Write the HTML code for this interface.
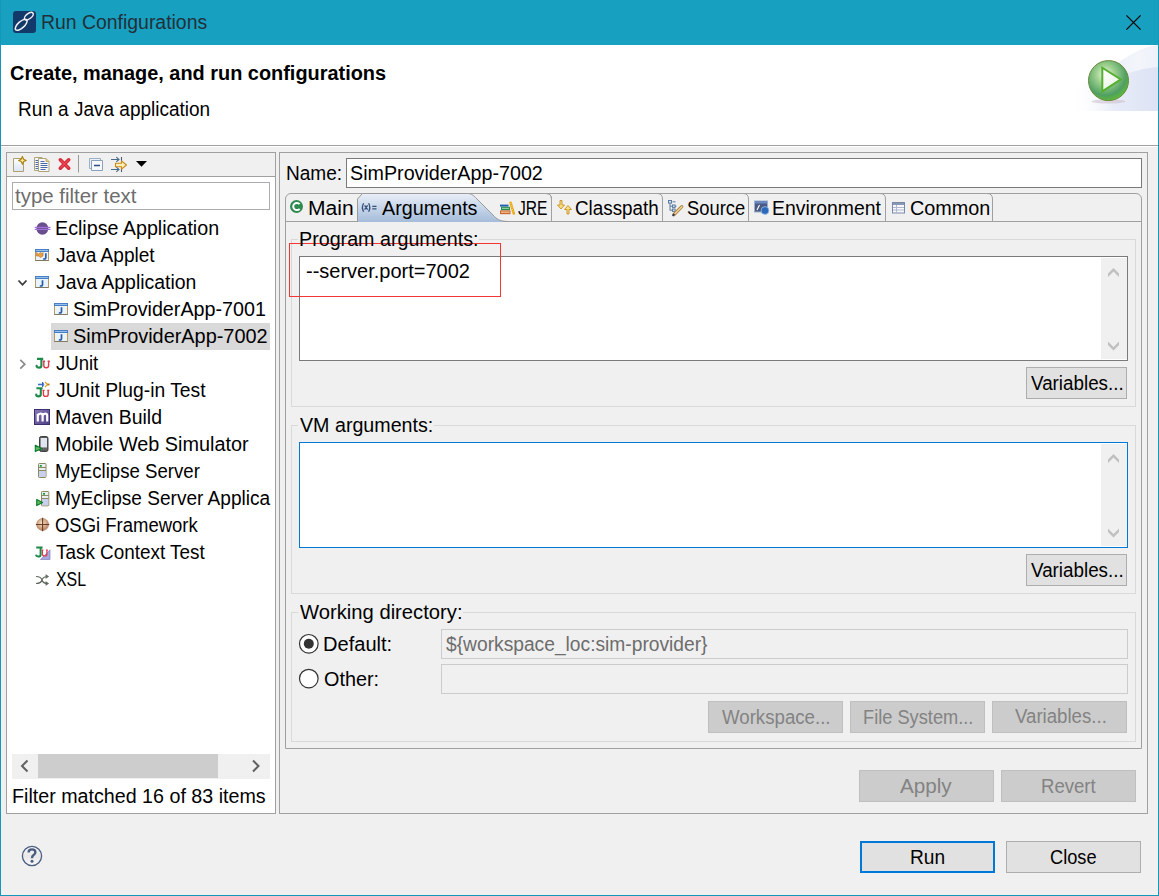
<!DOCTYPE html>
<html><head><meta charset="utf-8">
<style>
*{margin:0;padding:0;box-sizing:border-box}
html,body{width:1159px;height:896px;overflow:hidden;background:#f0f0f0;font-family:"Liberation Sans",sans-serif;color:#000;position:relative}
.a{position:absolute}
.t{position:absolute;line-height:0;white-space:pre;transform-origin:0 0}
.bx{position:absolute;border:1px solid #a0a0a0}
.btn{position:absolute;background:#e1e1e1;border:1px solid #adadad}
.dis{background:#cccccc;border-color:#bfbfbf}
.grp{position:absolute;border:1px solid #d9d9d9}
.lbg{position:absolute;background:#f0f0f0;height:6px}
svg{position:absolute;overflow:visible}
</style></head><body>
<!-- ===== window frame ===== -->
<div class="a" style="left:0;top:0;width:1159px;height:45px;background:#18a0c0"></div>
<div class="a" style="left:0;top:0;width:1px;height:896px;background:#1597b9"></div>
<div class="a" style="left:1158px;top:0;width:1px;height:896px;background:#1597b9"></div>
<div class="a" style="left:0;top:895px;width:1159px;height:1px;background:#1597b9"></div>
<!-- title icon -->
<div class="a" style="left:13px;top:11px;width:23px;height:22px;background:#13396b;border-radius:3px"></div>
<svg style="left:13px;top:11px" width="23" height="22" viewBox="0 0 23 22">
 <ellipse cx="15.8" cy="5.2" rx="5.2" ry="2.6" transform="rotate(-38 15.8 5.2)" fill="none" stroke="#f2f2f2" stroke-width="1.4"/>
 <ellipse cx="8.2" cy="13.8" rx="7.4" ry="3.2" transform="rotate(-42 8.2 13.8)" fill="none" stroke="#f2f2f2" stroke-width="1.5"/>
</svg>
<!-- close X -->
<svg style="left:1125px;top:15px" width="17" height="16" viewBox="0 0 17 16"><path d="M1.4 0.4L15.6 14.6M15.6 0.4L1.4 14.6" stroke="#000" stroke-width="1.2"/></svg>

<!-- ===== header ===== -->
<div class="a" style="left:1px;top:45px;width:1157px;height:100px;background:#fff"></div>
<svg style="left:1070px;top:45px" width="88" height="66" viewBox="0 0 88 66">
 <defs>
  <linearGradient id="bnr" x1="0" y1="0" x2="1" y2="0"><stop offset="0" stop-color="#fff" stop-opacity="0"/><stop offset="0.5" stop-color="#e8ecf8"/><stop offset="1" stop-color="#dde3f5"/></linearGradient>
  <linearGradient id="bnr2" x1="0" y1="0" x2="1" y2="0"><stop offset="0" stop-color="#fff" stop-opacity="0"/><stop offset="0.6" stop-color="#f3f5fb"/><stop offset="1" stop-color="#eef1fa"/></linearGradient>
 </defs>
 <rect x="0" y="0" width="88" height="66" fill="url(#bnr)"/>
 <path d="M0 0 H88 V0 C70 3, 55 12, 40 24 C 30 32, 20 40, 0 40 Z" fill="#fff"/>
 <path d="M40 24 C 55 12, 70 3, 88 0 V 22 C 75 23, 62 26, 50 32 Z" fill="url(#bnr2)"/>
</svg>
<svg style="left:1085px;top:55px" width="50" height="52" viewBox="0 0 50 52">
 <defs>
  <radialGradient id="pg" cx="0.42" cy="0.35" r="0.65">
   <stop offset="0" stop-color="#f4fbf0"/><stop offset="0.35" stop-color="#9fd18f"/><stop offset="0.8" stop-color="#4f9f62"/><stop offset="1" stop-color="#5cb83a"/>
  </radialGradient>
 </defs>
 <ellipse cx="23.5" cy="46.5" rx="17" ry="2" fill="#c8b8c8" opacity="0.5"/>
 <circle cx="23.5" cy="25.6" r="20" fill="url(#pg)" stroke="#6a8a3a" stroke-width="1"/>
 <path d="M17.3 12.7 L17.3 36.4 L35.8 24.4 Z" fill="#fff" fill-opacity="0.85" stroke="#56b030" stroke-width="2" stroke-linejoin="miter"/>
</svg>
<div class="a" style="left:1px;top:145px;width:1157px;height:1px;background:#a0a0a0"></div>
<div class="a" style="left:1px;top:146px;width:1157px;height:1px;background:#fff"></div>

<!-- ===== left panel ===== -->
<div class="bx" style="left:6px;top:152px;width:270px;height:662px;background:#fff"></div>
<div class="a" style="left:7px;top:153px;width:268px;height:24px;background:#f0f0f0;border-bottom:1px solid #a0a0a0"></div>
<!-- toolbar icons -->
<svg style="left:12px;top:156px" width="140" height="18" viewBox="0 0 140 18">
 <defs><linearGradient id="pgn" x1="0" y1="0" x2="0" y2="1"><stop offset="0" stop-color="#fff"/><stop offset="1" stop-color="#d8e4f4"/></linearGradient></defs>
 <!-- new -->
 <path d="M1.5 2.5 H11.5 V15.5 H1.5 Z" fill="url(#pgn)" stroke="#b0a070" stroke-width="1"/>
 <path d="M10.4 0.6 L11.6 3.2 L14.2 4.4 L11.6 5.6 L10.4 8.2 L9.2 5.6 L6.6 4.4 L9.2 3.2 Z" fill="#fbeaa0" stroke="#a8820a" stroke-width="1.1" stroke-linejoin="round"/>
 <!-- duplicate -->
 <path d="M22.5 1.5 H30 V14.5 H22.5 Z" fill="#f4f6fa" stroke="#b0a478"/>
 <path d="M26.5 2.5 H34 L37 5.5 V15.5 H26.5 Z" fill="#f6f8fc" stroke="#b0a478"/>
 <path d="M34 2.5 V5.5 H37" fill="#e0c880" stroke="#c0a860"/>
 <path d="M28.5 5.5h4M28.5 7.5h7M28.5 9.5h7M28.5 11.5h7M28.5 13.5h5M23.5 4.5h2.5M23.5 6.5h2.5M23.5 8.5h2.5M23.5 10.5h2.5M23.5 12.5h2.5" stroke="#4a6aa8" stroke-width="1"/>
 <!-- delete -->
 <path d="M48.3 3.8 L56.7 12.2 M56.7 3.8 L48.3 12.2" stroke="#d82a38" stroke-width="3.6" stroke-linecap="round"/>
 <path d="M48.8 4.3 L56.2 11.7 M56.2 4.3 L48.8 11.7" stroke="#f05a66" stroke-width="1.2" stroke-linecap="round" opacity="0.7"/>
 <!-- separator -->
 <path d="M66.5 -1 V16.5" stroke="#9a9a9a" stroke-width="1"/>
 <!-- collapse -->
 <path d="M77.5 2.5 H88.5 V12.5 H77.5 Z" fill="#eef2f8" stroke="#9ab0c8"/>
 <path d="M79.5 4.5 H90.5 V14.5 H79.5 Z" fill="#f6f8fc" stroke="#8aa0b8"/>
 <path d="M82 9.5 H88" stroke="#2a4e8a" stroke-width="1.5"/>
 <!-- filter -->
 <path d="M99 3.5 H107 M104.3 1.2 L107 3.5 L104.3 5.8 M99 13.5 H107 M104.3 11.2 L107 13.5 L104.3 15.8" fill="none" stroke="#4a6a8a" stroke-width="1.1"/>
 <path d="M109.5 1 V5.5 M109.5 11.5 V16" stroke="#4a5a78" stroke-width="1.1"/>
 <path d="M103.5 7.2 H109.5 V4.8 L114.5 9 L109.5 13.2 V10.8 H103.5 Z" fill="#fff0b8" stroke="#c8881a" stroke-width="1.1" stroke-linejoin="round"/>
 <!-- dropdown -->
 <path d="M124 5 H135 L129.5 10.8 Z" fill="#000"/>
</svg>
<div class="bx" style="left:12px;top:182px;width:258px;height:28px;border-color:#abadb3;background:#fff"></div>
<!-- selection -->
<div class="a" style="left:51px;top:323px;width:219px;height:27px;background:#d9d9d9"></div>
<!-- tree chevrons -->
<svg style="left:17px;top:278px" width="12" height="10" viewBox="0 0 12 10"><path d="M1.5 2.5 L5.5 6.8 L9.5 2.5" fill="none" stroke="#3a3a3a" stroke-width="1.8"/></svg>
<svg style="left:18px;top:358px" width="10" height="12" viewBox="0 0 10 12"><path d="M2.3 1.8 L6.8 6.2 L2.3 10.6" fill="none" stroke="#8a8a8a" stroke-width="1.7"/></svg>
<!-- tree icons -->
<svg style="left:34px;top:220px" width="18" height="370" viewBox="0 0 18 370">
 <defs>
  <linearGradient id="jwin" x1="0" y1="0" x2="0" y2="1"><stop offset="0" stop-color="#fff"/><stop offset="1" stop-color="#dce8f6"/></linearGradient>
 </defs>
 <!-- eclipse app -->
 <ellipse cx="8.4" cy="8.5" rx="5.9" ry="6.2" fill="#6a4e8e"/>
 <path d="M1.2 7.4 H16 M1.2 9.4 H16" stroke="#a070d8" stroke-width="1.2" stroke-linecap="round"/>
 <!-- java applet (row1, top 249-220=29) -->
 <g transform="translate(0,29)">
  <rect x="1.5" y="0.5" width="13" height="11" fill="#eaf4fc" stroke="#b89a60"/><rect x="1" y="0" width="14" height="3" fill="#4a7ec4"/><path d="M2 1.5 H14" stroke="#a8d0f0" stroke-width="0.8"/><path d="M1.5 11.5 H14.5" stroke="#807860"/>
  <path d="M2.5 3.5 L4.5 5 L6.5 3.5 L8.5 5 L9 3.5 V7 L6.5 8.5 L4.5 7 L2.5 7 Z" fill="#e8a040" stroke="#b87020" stroke-width="0.6"/>
  <path d="M11.8 4.2 V8.6 Q11.8 10.2 9.9 10 L9.2 9.8" fill="none" stroke="#2a5aa8" stroke-width="1.7"/>
 </g>
 <!-- java application (row2, 276) -->
 <g transform="translate(0,56)"><rect x="1.5" y="0.5" width="13" height="11" fill="#eaf4fc" stroke="#b89a60"/><rect x="1" y="0" width="14" height="3" fill="#4a7ec4"/><path d="M2 1.5 H14" stroke="#a8d0f0" stroke-width="0.8"/><path d="M1.5 11.5 H14.5" stroke="#807860"/><path d="M8.5 4.2 V8.6 Q8.5 10.2 6.6 10 L5.8 9.8" fill="none" stroke="#2a5aa8" stroke-width="1.7"/></g>
 <!-- junit row5 (358) -->
 <g transform="translate(0,138)">
  <path d="M3 0.9 H9.2 M7.4 0.9 V7.4 Q7.4 9.6 5 9.6 Q3.1 9.6 2.4 8.2" fill="none" stroke="#1e8a4a" stroke-width="2.1"/>
  <circle cx="2.6" cy="7.8" r="1.1" fill="#1e8a4a"/>
  <path d="M9.8 3.4 V7.6 Q9.8 9.8 12.2 9.8 Q14.6 9.8 14.6 7.6 V3.4 M8.8 3.2h2.2M13.6 3.2h2.2" fill="none" stroke="#e03848" stroke-width="1.4"/>
 </g>
 <!-- junit plugin row6 (381) -->
 <g transform="translate(0,161)">
  <path d="M4 3.5 H8.5" stroke="#3a70d0" stroke-width="1.6"/>
  <path d="M8.5 1 Q11 3.5 8.5 6 Z" fill="#8ab0f0" stroke="#3a6ac8" stroke-width="1"/>
  <path d="M11 1 L13.5 3.5 L11 6" fill="none" stroke="#e0a020" stroke-width="1.2"/>
  <rect x="13.5" y="2.6" width="2" height="1.8" fill="#c07010"/>
  <path d="M2.4 7.2 H8.6 M6.8 7.2 V13.2 Q6.8 15.4 4.4 15.4 Q2.6 15.4 2 14" fill="none" stroke="#1e8a4a" stroke-width="2.1"/>
  <circle cx="2.2" cy="13.6" r="1.1" fill="#1e8a4a"/>
  <path d="M9.4 9.6 V13.2 Q9.4 15.4 11.8 15.4 Q14.2 15.4 14.2 13.2 V9.6 M8.4 9.4h2.2M13.2 9.4h2.2" fill="none" stroke="#e03848" stroke-width="1.4"/>
 </g>
 <!-- maven row7 (409) -->
 <g transform="translate(0,189)">
  <defs><linearGradient id="mvg" x1="0" y1="0" x2="1" y2="1"><stop offset="0" stop-color="#8a7ab8"/><stop offset="1" stop-color="#4e3e84"/></linearGradient></defs>
  <rect x="0.5" y="0.5" width="15" height="15" fill="url(#mvg)" stroke="#3e3070" stroke-width="1"/>
  <path d="M3.8 12.6 V4.8 M3.8 6.6 Q4.6 4.6 6.6 4.6 Q8.6 4.6 8.6 6.8 V12.6 M8.6 6.6 Q9.4 4.6 11.2 4.6 Q13.2 4.6 13.2 6.8 V12.6" fill="none" stroke="#fff" stroke-width="2.2"/>
 </g>
 <!-- mobile row8 (436) -->
 <g transform="translate(0,216)">
  <rect x="5.5" y="0.5" width="8.5" height="15" rx="1.8" fill="#585858" stroke="#404040" stroke-width="1"/>
  <rect x="6.6" y="2" width="6.4" height="9.5" fill="#dfe6ef"/>
  <path d="M7 13 h1 M9.3 13 h1 M11.6 13 h1" stroke="#909090" stroke-width="1"/>
  <path d="M1.3 9.3 V15.6 L7.8 12.4 Z" fill="#5ab860" stroke="#0a7a2a" stroke-width="1.1" stroke-linejoin="round"/>
 </g>
 <!-- server row9 (464) -->
 <g transform="translate(0,244)">
  <rect x="4.5" y="-0.5" width="7.5" height="14" rx="0.8" fill="#eceef4" stroke="#8a8a60"/>
  <rect x="5" y="6.5" width="6.5" height="6.5" fill="#c8d0ee"/>
  <path d="M4.5 3.5 H12 M4.5 6.5 H12" stroke="#8a8a60"/>
  <rect x="5.8" y="1" width="2" height="1.7" fill="#10a030"/>
 </g>
 <!-- server app row10 (491) -->
 <g transform="translate(0,271)">
  <rect x="7.5" y="0.5" width="7.3" height="14.3" rx="0.8" fill="#eceef4" stroke="#8a8a60"/>
  <rect x="8" y="7.5" width="6.3" height="6.8" fill="#c8d0ee"/>
  <path d="M7.5 4.5 H14.8 M7.5 7.5 H14.8" stroke="#8a8a60"/>
  <rect x="9" y="2" width="2" height="1.7" fill="#10a030"/>
  <path d="M2.7 8.6 V14.6 L8.6 11.6 Z" fill="#5ab860" stroke="#0a7a2a" stroke-width="1.1" stroke-linejoin="round"/>
 </g>
 <!-- osgi row11 (517) -->
 <g transform="translate(0,297)">
  <defs><radialGradient id="osg" cx="0.45" cy="0.4" r="0.6"><stop offset="0" stop-color="#f8e8c8"/><stop offset="1" stop-color="#b88060"/></radialGradient></defs>
  <circle cx="8.6" cy="7.5" r="6" fill="url(#osg)" stroke="#c09070" stroke-width="0.8"/>
  <path d="M8.6 0.8 V14.2 M1.9 7.5 H15.3" stroke="#6a3a24" stroke-width="1.1"/>
 </g>
 <!-- task context row12 (544) -->
 <g transform="translate(0,324)">
  <path d="M6.5 15.5 L16 5.8 V15.5 Z" fill="#a8a8e0" stroke="#8080c0" stroke-width="0.7"/>
  <path d="M2.2 3.6 H8.6 M6.6 3.6 V10.4 Q6.6 12.6 4.2 12.6 Q2.4 12.6 1.8 10.8" fill="none" stroke="#1e8a4a" stroke-width="2"/>
  <path d="M8.4 6.2 V10 Q8.4 12 10.6 12 Q12.9 12 12.9 10 V6.2 M7.6 6.1h1.8M12 6.1h1.8" fill="none" stroke="#e03848" stroke-width="1.2"/>
 </g>
 <!-- xsl row13 (574) -->
 <g transform="translate(0,354)">
  <path d="M2 2.5 Q7 2.5 8 6 Q9 9.5 13.5 9.5 M2 9.5 Q7 9.5 8 6 Q9 2.5 13.5 2.5" fill="none" stroke="#606a60" stroke-width="1.2"/>
  <path d="M11.5 0.8 L14 2.5 L11.5 4.2 M11.5 7.8 L14 9.5 L11.5 11.2" fill="none" stroke="#606a60" stroke-width="1.2"/>
 </g>
</svg>
<!-- level-2 icons -->
<svg style="left:53px;top:303px" width="18" height="40" viewBox="0 0 18 40">
 <g><rect x="1.5" y="0.5" width="13" height="11" fill="#eaf4fc" stroke="#b89a60"/><rect x="1" y="0" width="14" height="3" fill="#4a7ec4"/><path d="M2 1.5 H14" stroke="#a8d0f0" stroke-width="0.8"/><path d="M1.5 11.5 H14.5" stroke="#807860"/><path d="M8.5 4.2 V8.6 Q8.5 10.2 6.6 10 L5.8 9.8" fill="none" stroke="#2a5aa8" stroke-width="1.7"/></g>
 <g transform="translate(0,27)"><rect x="1.5" y="0.5" width="13" height="11" fill="#eaf4fc" stroke="#b89a60"/><rect x="1" y="0" width="14" height="3" fill="#4a7ec4"/><path d="M2 1.5 H14" stroke="#a8d0f0" stroke-width="0.8"/><path d="M1.5 11.5 H14.5" stroke="#807860"/><path d="M8.5 4.2 V8.6 Q8.5 10.2 6.6 10 L5.8 9.8" fill="none" stroke="#2a5aa8" stroke-width="1.7"/></g>
</svg>
<!-- h scrollbar -->
<div class="a" style="left:12px;top:754px;width:258px;height:25px;background:#f0f0f0"></div>
<div class="a" style="left:38px;top:754px;width:180px;height:24px;background:#cdcdcd"></div>
<svg style="left:18px;top:758px" width="14" height="16" viewBox="0 0 14 16"><path d="M9.5 2.5 L4 8 L9.5 13.5" fill="none" stroke="#606060" stroke-width="2"/></svg>
<svg style="left:249px;top:758px" width="14" height="16" viewBox="0 0 14 16"><path d="M4 2.5 L9.5 8 L4 13.5" fill="none" stroke="#606060" stroke-width="2"/></svg>

<!-- ===== right panel ===== -->
<div class="bx" style="left:279px;top:152px;width:869px;height:662px"></div>
<div class="bx" style="left:346px;top:158px;width:796px;height:30px;background:#fff;border-color:#7a7a7a"></div>
<!-- tab folder -->
<div class="bx" style="left:285px;top:193px;width:857px;height:556px;border-radius:6px 6px 0 0;background:#f0f0f0"></div>
<div class="a" style="left:286px;top:221px;width:855px;height:1px;background:#a0a0a0"></div>
<!-- selected tab -->
<svg style="left:357px;top:193px" width="152" height="29" viewBox="0 0 152 29">
 <defs><linearGradient id="selg" x1="0" y1="0" x2="0" y2="1"><stop offset="0" stop-color="#e9eff8"/><stop offset="1" stop-color="#a5bcda"/></linearGradient></defs>
 <path d="M0.5 29 V6 L5.5 0.5 H110.5 C113.5 0.5 115.5 1.5 118.5 4.5 L137.5 23.5 C141 27 144 28.5 150 28.5 V29 Z" fill="url(#selg)"/>
 <path d="M0.5 29 V6 L5.5 0.5 H110.5 C113.5 0.5 115.5 1.5 118.5 4.5 L137.5 23.5 C141 27 144 28.5 152 28.5" fill="none" stroke="#9a9a9a" stroke-width="1"/>
</svg>
<!-- tab separators with rounded top-right corners -->
<svg style="left:280px;top:193px" width="720" height="29" viewBox="0 0 720 29">
 <path d="M271.5 28 V6 Q271.5 0.5 266 0.5 M382.5 28 V6 Q382.5 0.5 377 0.5 M468.5 28 V6 Q468.5 0.5 463 0.5 M605.5 28 V6 Q605.5 0.5 600 0.5 M712.5 28 V6 Q712.5 0.5 707 0.5" fill="none" stroke="#a0a0a0" stroke-width="1"/>
 <path d="M271.5 28 V6 Q271.5 0.5 266 0.5" fill="none" stroke="#a0a0a0"/>
</svg>
<!-- tab icons -->
<svg style="left:289px;top:199px" width="720" height="18" viewBox="0 0 720 18">
 <!-- main -->
 <circle cx="7.5" cy="7.5" r="6.5" fill="#2e8a4e"/>
 <path d="M10.6 5.2 A3.6 3.6 0 1 0 10.6 9.8" fill="none" stroke="#fff" stroke-width="2"/>
 <!-- args (x)= -->
 <g transform="translate(72,4)" fill="none" stroke="#34507a" stroke-width="1.3"><path d="M2.6 0.3 Q0.2 4.5 2.6 8.7 M7.6 0.3 Q10 4.5 7.6 8.7 M3.6 2.3 L6.6 6.7 M6.6 2.3 L3.6 6.7 M11.3 3.3 H15.5 M11.3 5.8 H15.5"/></g>
 <!-- JRE books -->
 <g transform="translate(211,3)">
  <rect x="0" y="2.6" width="8.5" height="2" fill="#2060b0"/>
  <rect x="1" y="4.8" width="9" height="3.4" fill="#2a8a50"/><rect x="2" y="5.8" width="7" height="1.2" fill="#8ad0a0"/>
  <rect x="0" y="8.4" width="10.5" height="3.8" fill="#c86a30"/><rect x="1" y="9.4" width="8.5" height="1.6" fill="#f0b080"/>
  <path d="M10.6 0.8 L13.8 11.5" stroke="#e8a818" stroke-width="2.6" stroke-linecap="round"/>
  <path d="M10.6 0.8 L13.8 11.5" stroke="#f8d860" stroke-width="1" stroke-dasharray="1 1.2"/>
 </g>
 <!-- classpath arrows -->
 <g transform="translate(268,1)">
  <path d="M3 0.5 V5 H0.5 L4 9 L7.5 5 H5 V0.5 Z" fill="#f8e080" stroke="#c89020" stroke-width="0.9"/>
  <path d="M10 14 V9.5 H7.5 L11 5.5 L14.5 9.5 H12 V14 Z" fill="#f8e080" stroke="#c89020" stroke-width="0.9"/>
 </g>
 <!-- source -->
 <g transform="translate(379,1)">
  <rect x="0.5" y="0.5" width="3" height="2.6" fill="#dde6f0" stroke="#5a7aa0" stroke-width="1"/>
  <path d="M4.5 1.8 H7.5 M2 3.2 V10.5 M2 6.2 H4.2 M2 10.2 H4.2 M7 6.2 H8.5" stroke="#5a7aa0" stroke-width="1"/>
  <rect x="4.5" y="5" width="2.6" height="2.4" fill="#dde6f0" stroke="#5a7aa0" stroke-width="1"/>
  <rect x="4.5" y="9" width="2.6" height="2.4" fill="#dde6f0" stroke="#5a7aa0" stroke-width="1"/>
  <path d="M6 14.5 L13.8 6.7" stroke="#a88040" stroke-width="3.2" stroke-linecap="round"/>
  <path d="M6 14.5 L13.8 6.7" stroke="#f0d090" stroke-width="1.6" stroke-linecap="round"/>
  <path d="M4.6 15.8 L6.4 13.8" stroke="#303a50" stroke-width="1.8"/>
 </g>
 <!-- environment -->
 <g transform="translate(465,0.5)">
  <rect x="0.5" y="1.5" width="13" height="11" fill="#4a5a80" stroke="#9ab0d0"/>
  <rect x="1" y="2" width="12" height="2" fill="#6a8ac8"/>
  <path d="M3 10.5 L5.5 5.5" stroke="#fff" stroke-width="1.1"/>
  <circle cx="11" cy="11" r="3.9" fill="#2a68b8" stroke="#a0c0e8" stroke-width="0.8"/>
 </g>
 <!-- common -->
 <g transform="translate(603,3)">
  <rect x="0.5" y="0.5" width="12" height="10.5" fill="#f6f8fc" stroke="#7a88a8"/>
  <rect x="1" y="1" width="11" height="2" fill="#8a98b8"/>
  <path d="M1 5.5h11M1 8h11M4.5 3v8" stroke="#b0b8d0" stroke-width="1"/>
 </g>
</svg>

<!-- program arguments group -->
<div class="grp" style="left:291px;top:239px;width:845px;height:168px"></div>
<div class="grp" style="left:291px;top:425px;width:845px;height:169px"></div>
<div class="grp" style="left:291px;top:612px;width:845px;height:130px"></div>
<div class="lbg" style="left:298px;top:235px;width:181px"></div>
<div class="lbg" style="left:298px;top:421px;width:136px"></div>
<div class="lbg" style="left:298px;top:608px;width:165px"></div>

<!-- program args textarea -->
<div class="bx" style="left:299px;top:256px;width:829px;height:105px;background:#fff;border-color:#7a7a7a"></div>
<div class="a" style="left:1101px;top:258px;width:26px;height:101px;background:#f0f0f0"></div>
<svg style="left:1101px;top:258px" width="26" height="101" viewBox="0 0 26 101">
 <path d="M7 15.5 L12.5 10 L18 15.5 V19 L12.5 13.5 L7 19 Z" fill="#c0c0c0"/>
 <path d="M7 83.5 L12.5 89 L18 83.5 V87 L12.5 92.5 L7 87 Z" fill="#c0c0c0"/>
</svg>
<div class="btn" style="left:1026px;top:367px;width:101px;height:32px"></div>

<!-- red annotation -->
<div class="a" style="left:289px;top:243px;width:212px;height:54px;border:1px solid #f53434"></div>

<!-- VM args textarea -->
<div class="bx" style="left:299px;top:442px;width:829px;height:106px;background:#fff;border-color:#0078d7"></div>
<div class="a" style="left:1101px;top:444px;width:26px;height:102px;background:#f0f0f0"></div>
<svg style="left:1101px;top:444px" width="26" height="102" viewBox="0 0 26 102">
 <path d="M7 15.5 L12.5 10 L18 15.5 V19 L12.5 13.5 L7 19 Z" fill="#c0c0c0"/>
 <path d="M7 84.5 L12.5 90 L18 84.5 V88 L12.5 93.5 L7 88 Z" fill="#c0c0c0"/>
</svg>
<div class="btn" style="left:1026px;top:554px;width:101px;height:32px"></div>

<!-- working directory -->
<svg style="left:298px;top:633px" width="22" height="58" viewBox="0 0 22 58">
 <circle cx="10.8" cy="10.8" r="9.3" fill="#fff" stroke="#333" stroke-width="1.2"/>
 <circle cx="10.8" cy="10.8" r="5" fill="#333"/>
 <circle cx="10.8" cy="45.6" r="9.3" fill="#fff" stroke="#333" stroke-width="1.2"/>
</svg>
<div class="bx" style="left:441px;top:629px;width:687px;height:30px;border-color:#cccccc;background:#f0f0f0"></div>
<div class="bx" style="left:441px;top:664px;width:687px;height:30px;border-color:#cccccc;background:#f0f0f0"></div>
<div class="btn dis" style="left:708px;top:701px;width:135px;height:32px"></div>
<div class="btn dis" style="left:850px;top:701px;width:135px;height:32px"></div>
<div class="btn dis" style="left:992px;top:701px;width:135px;height:32px"></div>

<!-- apply/revert -->
<div class="btn dis" style="left:859px;top:770px;width:135px;height:32px"></div>
<div class="btn dis" style="left:1001px;top:770px;width:135px;height:32px"></div>

<!-- ===== bottom ===== -->
<svg style="left:20px;top:844px" width="24" height="24" viewBox="0 0 24 24">
 <defs><linearGradient id="hg" x1="0" y1="0" x2="0" y2="1"><stop offset="0" stop-color="#fafafa"/><stop offset="0.5" stop-color="#e8e8e8"/><stop offset="1" stop-color="#f8f8f8"/></linearGradient></defs>
 <circle cx="12" cy="12" r="9.6" fill="url(#hg)" stroke="#4a5d80" stroke-width="1.3"/>
 <path d="M8.6 8.4 Q8.6 5.4 12 5.4 Q15.4 5.4 15.4 8.2 Q15.4 10 13.4 11.2 Q12 12 12 14.2" fill="none" stroke="#4a5d80" stroke-width="2.4"/>
 <circle cx="12" cy="17.3" r="1.5" fill="#4a5d80"/>
</svg>
<div class="btn" style="left:860px;top:841px;width:135px;height:32px;border:2px solid #0078d7"></div>
<div class="btn" style="left:1006px;top:841px;width:135px;height:32px"></div>

<div class="t" style="left:40.85px;top:21.80px;font-size:19.50px;transform:scaleX(0.9953);color:#20303a">Run Configurations</div>
<div class="t" style="left:9.55px;top:72.90px;font-size:20.00px;transform:scaleX(0.9953);color:#000;font-weight:bold">Create, manage, and run configurations</div>
<div class="t" style="left:17.98px;top:109.00px;font-size:19.50px;transform:scaleX(0.9737);color:#000">Run a Java application</div>
<div class="t" style="left:15.09px;top:195.60px;font-size:19.50px;transform:scaleX(1.0473);color:#6d6d6d">type filter text</div>
<div class="t" style="left:55.03px;top:227.80px;font-size:19.50px;transform:scaleX(1.0094);color:#000">Eclipse Application</div>
<div class="t" style="left:55.92px;top:254.80px;font-size:19.50px;transform:scaleX(0.9787);color:#000">Java Applet</div>
<div class="t" style="left:55.91px;top:281.80px;font-size:19.50px;transform:scaleX(0.9962);color:#000">Java Application</div>
<div class="t" style="left:72.81px;top:308.80px;font-size:19.50px;transform:scaleX(1.0113);color:#000">SimProviderApp-7001</div>
<div class="t" style="left:72.81px;top:335.80px;font-size:19.50px;transform:scaleX(1.0203);color:#000">SimProviderApp-7002</div>
<div class="t" style="left:55.93px;top:362.80px;font-size:19.50px;transform:scaleX(0.9504);color:#000">JUnit</div>
<div class="t" style="left:55.91px;top:389.80px;font-size:19.50px;transform:scaleX(0.9879);color:#000">JUnit Plug-in Test</div>
<div class="t" style="left:55.04px;top:416.80px;font-size:19.50px;transform:scaleX(0.9969);color:#000">Maven Build</div>
<div class="t" style="left:55.01px;top:443.80px;font-size:19.50px;transform:scaleX(1.0166);color:#000">Mobile Web Simulator</div>
<div class="t" style="left:55.11px;top:470.80px;font-size:19.50px;transform:scaleX(0.9549);color:#000">MyEclipse Server</div>
<div class="t" style="left:55.07px;top:497.80px;font-size:19.50px;transform:scaleX(0.9780);color:#000">MyEclipse Server Applica</div>
<div class="t" style="left:55.38px;top:524.80px;font-size:19.50px;transform:scaleX(0.9474);color:#000">OSGi Framework</div>
<div class="t" style="left:55.62px;top:551.80px;font-size:19.50px;transform:scaleX(0.9688);color:#000">Task Context Test</div>
<div class="t" style="left:55.82px;top:578.80px;font-size:19.50px;transform:scaleX(0.8155);color:#000">XSL</div>
<div class="t" style="left:11.73px;top:795.80px;font-size:19.50px;transform:scaleX(1.0088);color:#000">Filter matched 16 of 83 items</div>
<div class="t" style="left:286.08px;top:172.90px;font-size:19.50px;transform:scaleX(0.9775);color:#000">Name:</div>
<div class="t" style="left:350.41px;top:172.70px;font-size:19.50px;transform:scaleX(1.0108);color:#000">SimProviderApp-7002</div>
<div class="t" style="left:308.32px;top:208.00px;font-size:19.50px;transform:scaleX(1.0790);color:#000">Main</div>
<div class="t" style="left:381.50px;top:208.00px;font-size:19.50px;transform:scaleX(1.0128);color:#000">Arguments</div>
<div class="t" style="left:518.39px;top:208.00px;font-size:19.50px;transform:scaleX(0.7987);color:#000">JRE</div>
<div class="t" style="left:575.46px;top:208.00px;font-size:19.50px;transform:scaleX(0.9664);color:#000">Classpath</div>
<div class="t" style="left:686.78px;top:208.00px;font-size:19.50px;transform:scaleX(0.9404);color:#000">Source</div>
<div class="t" style="left:772.45px;top:208.00px;font-size:19.50px;transform:scaleX(0.9950);color:#000">Environment</div>
<div class="t" style="left:909.51px;top:208.00px;font-size:19.50px;transform:scaleX(1.0152);color:#000">Common</div>
<div class="t" style="left:299.13px;top:238.70px;font-size:19.50px;transform:scaleX(1.0096);color:#000">Program arguments:</div>
<div class="t" style="left:306.00px;top:271.20px;font-size:19.50px;transform:scaleX(1.0250);color:#000">--server.port=7002</div>
<div class="t" style="left:1031.21px;top:383.00px;font-size:19.50px;transform:scaleX(0.9641);color:#000">Variables...</div>
<div class="t" style="left:300.30px;top:425.10px;font-size:19.50px;transform:scaleX(1.0080);color:#000">VM arguments:</div>
<div class="t" style="left:1030.91px;top:569.90px;font-size:19.50px;transform:scaleX(0.9641);color:#000">Variables...</div>
<div class="t" style="left:300.30px;top:611.60px;font-size:19.50px;transform:scaleX(1.0366);color:#000">Working directory:</div>
<div class="t" style="left:323.40px;top:643.60px;font-size:19.50px;transform:scaleX(1.0288);color:#000">Default:</div>
<div class="t" style="left:324.01px;top:679.00px;font-size:19.50px;transform:scaleX(1.0159);color:#000">Other:</div>
<div class="t" style="left:445.81px;top:643.50px;font-size:19.50px;transform:scaleX(0.9849);color:#6d6d6d">${workspace_loc:sim-provider}</div>
<div class="t" style="left:721.81px;top:716.70px;font-size:19.50px;transform:scaleX(0.9566);color:#838383">Workspace...</div>
<div class="t" style="left:862.94px;top:716.70px;font-size:19.50px;transform:scaleX(0.9351);color:#838383">File System...</div>
<div class="t" style="left:1014.51px;top:716.40px;font-size:19.50px;transform:scaleX(0.9556);color:#838383">Variables...</div>
<div class="t" style="left:899.80px;top:786.10px;font-size:19.50px;transform:scaleX(1.0585);color:#838383">Apply</div>
<div class="t" style="left:1040.81px;top:786.10px;font-size:19.50px;transform:scaleX(0.9521);color:#838383">Revert</div>
<div class="t" style="left:909.57px;top:857.00px;font-size:19.50px;transform:scaleX(0.9801);color:#000">Run</div>
<div class="t" style="left:1049.69px;top:857.00px;font-size:19.50px;transform:scaleX(0.9339);color:#000">Close</div>
</body></html>
